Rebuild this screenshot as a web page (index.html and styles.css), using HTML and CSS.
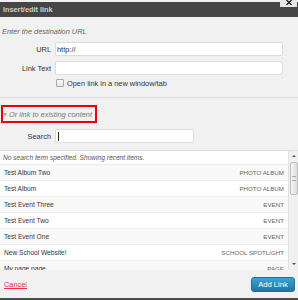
FILE: index.html
```html
<!DOCTYPE html>
<html>
<head>
<meta charset="utf-8">
<link rel="stylesheet" href="styles.css">
</head>
<body>
<div class="dialog">
  <div class="titlebar">
    <span class="title">Insert/edit link</span>
    <span class="close"><svg width="6" height="5" viewBox="0 0 6 5"><path d="M0.5 0 L5.5 5 M5.5 0 L0.5 5" stroke="#222" stroke-width="1.4"/></svg></span>
  </div>
  <div class="url-section">
    <div class="instructions">Enter the destination URL</div>
    <div class="field-row">
      <span class="label">URL</span>
      <div class="input"><span class="value">http://</span></div>
    </div>
    <div class="field-row second">
      <span class="label">Link Text</span>
      <div class="input"></div>
    </div>
    <div class="check-row">
      <span class="checkbox"></span>
      <span class="check-label">Open link in a new window/tab</span>
    </div>
  </div>
  <div class="toggle-wrap">
    <div class="toggle"><span class="arrow"></span><span class="toggle-text">Or link to existing content</span></div>
  </div>
  <div class="field-row search-row">
    <span class="label">Search</span>
    <div class="input search"><span class="caret"></span></div>
  </div>
  <div class="list">
    <div class="rows">
      <div class="notice">No search term specified. Showing recent items.</div>
      <div class="row alt"><span class="name">Test Album Two</span><span class="type">PHOTO ALBUM</span></div>
      <div class="row"><span class="name">Test Album</span><span class="type">PHOTO ALBUM</span></div>
      <div class="row alt"><span class="name">Test Event Three</span><span class="type">EVENT</span></div>
      <div class="row"><span class="name">Test Event Two</span><span class="type">EVENT</span></div>
      <div class="row alt"><span class="name">Test Event One</span><span class="type">EVENT</span></div>
      <div class="row"><span class="name">New School Website!</span><span class="type">SCHOOL SPOTLIGHT</span></div>
      <div class="row alt"><span class="name">My page page</span><span class="type">PAGE</span></div>
    </div>
    <div class="scrollbar">
      <span class="up"></span>
      <span class="thumb"><span class="grip"></span></span>
      <span class="spacer"></span>
      <span class="down"></span>
    </div>
  </div>
  <div class="footer">
    <a class="cancel">Cancel</a>
    <span class="button">Add Link</span>
  </div>
  <div class="bottom"></div>
</div>
</body>
</html>
```
FILE: styles.css
```css
html, body {
  margin: 0;
  padding: 0;
}
body {
  width: 298px;
  height: 300px;
  overflow: hidden;
  background: #f1f1f1;
  font-family: "Liberation Sans", Arial, sans-serif;
  font-size: 7.4px;
  color: #333;
}
.dialog {
  display: flex;
  flex-direction: column;
  height: 300px;
}
.titlebar {
  position: relative;
  margin-top: 2px;
  height: 15px;
  background: #464646;
  display: flex;
  align-items: center;
  padding-left: 3px;
  flex-shrink: 0;
}
.title {
  color: #d2d2c8;
  font-weight: bold;
  font-size: 7.3px;
}
.close {
  position: absolute;
  top: -2px;
  right: 1px;
  width: 17px;
  height: 7px;
  background: #e6e6e6;
  display: flex;
  justify-content: center;
  align-items: flex-start;
}
.close svg {
  display: block;
}
.url-section {
  padding-top: 10px;
  padding-bottom: 10px;
  border-bottom: 1px solid #dedede;
  flex-shrink: 0;
}
.instructions {
  font-style: italic;
  color: #666;
  line-height: 9px;
  padding-left: 2px;
}
.field-row {
  display: flex;
  align-items: center;
  margin-top: 6px;
}
.field-row.second {
  margin-top: 5px;
}
.label {
  width: 51px;
  text-align: right;
  padding-right: 4px;
  color: #333;
}
.input {
  box-sizing: border-box;
  width: 228px;
  height: 14px;
  background: #fff;
  border: 1px solid #dcdcdc;
  border-radius: 2px;
  display: flex;
  align-items: center;
  padding-left: 1px;
}
.value {
  color: #333;
}
.check-row {
  display: flex;
  align-items: center;
  margin-top: 4px;
  padding-left: 56px;
  height: 8px;
}
.checkbox {
  box-sizing: border-box;
  width: 8px;
  height: 8px;
  border: 1px solid #aaa;
  border-radius: 1px;
  background: linear-gradient(#fff, #e2e2e2);
  margin-right: 3px;
}
.check-label {
  color: #333;
}
.toggle-wrap {
  padding-top: 7px;
  padding-left: 1px;
  display: flex;
  flex-shrink: 0;
}
.toggle {
  box-sizing: border-box;
  height: 18px;
  border: 2px solid #ee0000;
  display: flex;
  align-items: center;
  padding-left: 0;
  padding-right: 3px;
}
.arrow {
  width: 0;
  height: 0;
  border-left: 2.5px solid transparent;
  border-right: 2.5px solid transparent;
  border-top: 4px solid #aaa;
  margin-right: 2px;
  margin-top: 1px;
}
.toggle-text {
  font-style: italic;
  color: #7a7a7a;
}
.search-row {
  margin-top: 6px;
  flex-shrink: 0;
}
.input.search {
  width: 139px;
}
.caret {
  width: 1px;
  height: 9px;
  background: #222;
  margin-left: 1px;
}
.list {
  margin-top: 7px;
  height: 120px;
  box-sizing: border-box;
  border-top: 1px solid #dcdcdc;
  display: flex;
  background: #fff;
  flex-shrink: 0;
}
.rows {
  flex: 1;
  overflow: hidden;
  font-size: 6.6px;
}
.notice {
  height: 14px;
  box-sizing: border-box;
  border-bottom: 1px solid #ececec;
  display: flex;
  align-items: center;
  padding-left: 3px;
  font-style: italic;
  color: #555;
}
.row {
  height: 16px;
  box-sizing: border-box;
  border-bottom: 1px solid #efefef;
  display: flex;
  align-items: center;
  justify-content: space-between;
  padding: 0 4px 0 4px;
  background: #fff;
}
.row.alt {
  background: #f9f9f9;
}
.name {
  color: #333;
}
.type {
  color: #666;
  font-size: 6.2px;
}
.scrollbar {
  width: 10px;
  box-sizing: border-box;
  background: #f0f0f0;
  border-left: 1px solid #e2e2e2;
  display: flex;
  flex-direction: column;
  align-items: center;
}
.up, .down {
  width: 0;
  height: 0;
  border-left: 2px solid transparent;
  border-right: 2px solid transparent;
}
.up {
  border-bottom: 2.5px solid #555;
  margin-top: 4px;
}
.down {
  border-top: 2.5px solid #555;
  margin-bottom: 5px;
}
.thumb {
  box-sizing: border-box;
  width: 8px;
  height: 33px;
  margin-top: 5px;
  border: 1px solid #bdbdbd;
  border-radius: 2px;
  background: linear-gradient(90deg, #f6f6f6, #dcdcdc);
  display: flex;
  align-items: center;
  justify-content: center;
}
.grip {
  width: 4px;
  height: 3px;
  border-top: 1px solid #aaa;
  border-bottom: 1px solid #aaa;
}
.spacer {
  flex: 1;
}
.footer {
  height: 28px;
  display: flex;
  align-items: center;
  justify-content: space-between;
  padding: 0 3px 0 4px;
  flex-shrink: 0;
}
.cancel {
  color: #f0303c;
  text-decoration: underline;
}
.button {
  box-sizing: border-box;
  width: 44px;
  height: 15px;
  border: 1px solid #1f6f96;
  border-radius: 3px;
  background: linear-gradient(#3aa3d3, #2176a0);
  color: #fff;
  font-size: 7.6px;
  display: flex;
  align-items: center;
  justify-content: center;
}
.bottom {
  height: 2px;
  background: #4a4a4a;
  flex-shrink: 0;
}
```
